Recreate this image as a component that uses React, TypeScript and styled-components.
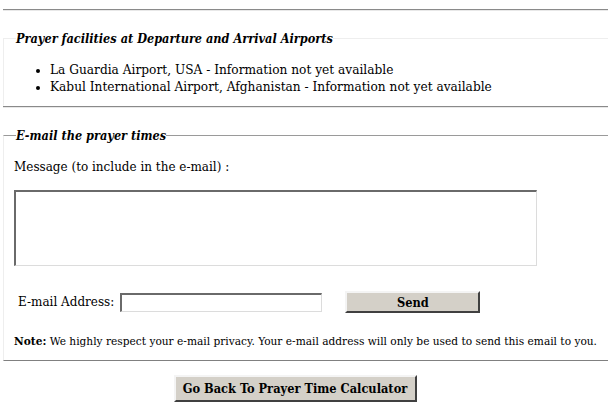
import React from "react";
import styled, { createGlobalStyle } from "styled-components";

const GlobalStyle = createGlobalStyle`
  body {
    margin: 0;
    background: #ffffff;
    color: #000000;
    font-family: "DejaVu Serif", "Liberation Serif", serif;
    font-size: 12px;
  }
`;

const Page = styled.div`
  width: 608px;
  padding-top: 9px;
`;

const Rule = styled.div<{ $gap?: number }>`
  margin-left: 3px;
  border-top: 1px solid #8a8a8a;
  border-bottom: 1px solid #e8e8e8;
  margin-bottom: ${({ $gap }) => $gap ?? 0}px;
`;

const Fieldset = styled.fieldset<{ $top: string; $bottom: string }>`
  margin: 0 0 0 3px;
  padding: 0 6px;
  border: 1px solid #eeeeee;
  border-top-color: ${({ $top }) => $top};
  border-bottom-color: ${({ $bottom }) => $bottom};
  border-right: none;
  min-width: 0;
`;

const Legend = styled.legend`
  margin-left: 6px;
  padding: 0;
  font-family: "DejaVu Serif Condensed", "DejaVu Serif", serif;
  font-weight: bold;
  font-style: italic;
  font-size: 12.6px;
  line-height: 15px;
`;

const AirportList = styled.ul`
  margin: 16px 0 9px 0;
  padding-left: 40px;
  font-size: 12.2px;
  line-height: 17px;
`;

const Label = styled.div`
  margin: 16px 0 0 4px;
  line-height: 16px;
`;

const MessageBox = styled.textarea`
  display: block;
  box-sizing: border-box;
  margin: 15px 0 0 4px;
  width: 523px;
  height: 76px;
  resize: none;
  border: 1px solid #dcdcdc;
  border-top: 2px solid #6a6a6a;
  border-left: 2px solid #6a6a6a;
  background: #fff;
`;

const AddressRow = styled.div`
  display: flex;
  align-items: center;
  margin: 25px 0 0 8px;
`;

const AddressLabel = styled.span`
  line-height: 16px;
`;

const AddressInput = styled.input`
  box-sizing: border-box;
  margin-left: 6px;
  width: 202px;
  height: 19px;
  border: 1px solid #dcdcdc;
  border-top: 2px solid #6a6a6a;
  border-left: 2px solid #6a6a6a;
  background: #fff;
`;

const Button = styled.button<{ $w: number; $h: number }>`
  box-sizing: border-box;
  width: ${({ $w }) => $w}px;
  height: ${({ $h }) => $h}px;
  background: #d4d0c8;
  border: 2px solid;
  border-color: #f4f4f4 #404040 #404040 #f4f4f4;
  font-family: "DejaVu Serif Condensed", "DejaVu Serif", serif;
  font-weight: bold;
  font-size: 12.7px;
  color: #000;
  padding: 0;
`;

const SendButton = styled(Button)`
  margin-left: 23px;
`;

const Note = styled.p`
  margin: 21px 0 12px 4px;
  font-family: "DejaVu Serif Condensed", "DejaVu Serif", serif;
  font-size: 11.8px;
  line-height: 14px;
  white-space: nowrap;
`;

const Footer = styled.div`
  display: flex;
  justify-content: center;
  padding: 14px 18px 0 0;
`;

export default function App() {
  return (
    <Page>
      <GlobalStyle />
      <Rule $gap={20} />
      <Fieldset $top="#eeeeee" $bottom="transparent">
        <Legend>Prayer facilities at Departure and Arrival Airports</Legend>
        <AirportList>
          <li>La Guardia Airport, USA - Information not yet available</li>
          <li>Kabul International Airport, Afghanistan - Information not yet available</li>
        </AirportList>
      </Fieldset>
      <Rule $gap={20} />
      <Fieldset $top="#9a9a9a" $bottom="#808080">
        <Legend>E-mail the prayer times</Legend>
        <Label>Message (to include in the e-mail) :</Label>
        <MessageBox />
        <AddressRow>
          <AddressLabel>E-mail Address:</AddressLabel>
          <AddressInput type="text" />
          <SendButton $w={135} $h={22}>Send</SendButton>
        </AddressRow>
        <Note>
          <b>Note:</b> We highly respect your e-mail privacy. Your e-mail address will only be used to send this email to you.
        </Note>
      </Fieldset>
      <Footer>
        <Button $w={243} $h={27}>Go Back To Prayer Time Calculator</Button>
      </Footer>
    </Page>
  );
}
